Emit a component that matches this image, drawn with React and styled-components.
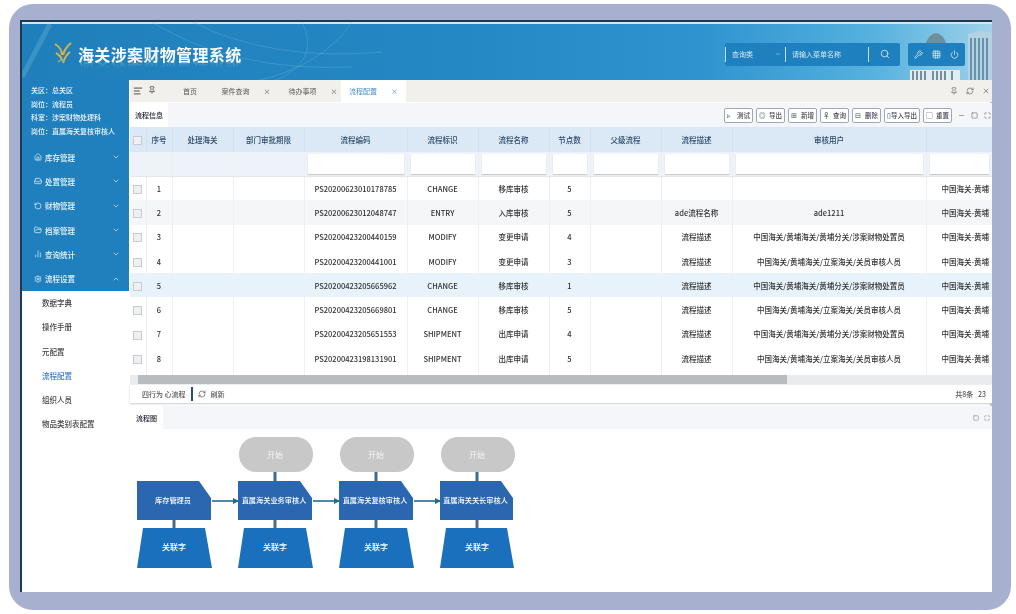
import React from "react";
import styled, { createGlobalStyle } from "styled-components";
import { Home, Inbox, RotateCcw, FolderOpen, BarChart2, Settings, ChevronDown, ChevronUp, Search, Grid3x3, Power, Wrench, AlignLeft, Pin, RefreshCw, X, Minus, Square, Maximize } from "lucide-react";

const Global = createGlobalStyle`
  html, body { margin: 0; padding: 0; background: #fff; }
  body { font-family: "Noto Sans CJK SC", "Liberation Sans", sans-serif; overflow: hidden; }
`;
const Frame = styled.div`
  box-sizing: border-box; width: 1002px; height: 606px; margin: 4px 0 0 9px;
  padding: 16px 19px 18px 11px; background: #a8b0d0; border-radius: 24px;
`;
const Shell = styled.div`
  width: 972px; height: 572px; background: #fff; display: flex; flex-direction: column;
  overflow: hidden; filter: blur(0.7px);
`;
const Header = styled.header`
  position: relative; flex: 0 0 60px; box-sizing: border-box; display: flex; align-items: center;
  padding: 6px 27px 0 30px; overflow: hidden;
  border-top: 2px solid #1d3a50; border-left: 2px solid #1d3a50;
  background: linear-gradient(90deg, #1f7fbb 0%, #2488c4 45%, #2e93cf 70%, #56b2df 88%, #9fd2ea 100%);
  box-shadow: inset 0 2px 0 #d5e6ef;
`;
const Arcs = styled.svg`position: absolute; left: 0; top: 0; pointer-events: none;`;
const Building = styled.svg`position: absolute; right: 0; top: 2px;`;
const Logo = styled.svg`flex: none; margin-right: 4px; position: relative;`;
const Title = styled.h1`
  position: relative; margin: 0; font-size: 16px; line-height: 22px; font-weight: 700; color: #f4fafd; letter-spacing: .35px;
  -webkit-box-reflect: below -7px linear-gradient(transparent 55%, rgba(255,255,255,.35));
`;
const HeaderRight = styled.div`position: relative; margin-left: auto; display: flex; gap: 8px;`;
const SearchPill = styled.div`
  width: 175px; height: 23px; border-radius: 2px; background: #1f80bf; color: #d4e9f5; display: flex; align-items: center; font-size: 7px;
`;
const Field = styled.span`
  box-sizing: border-box; width: ${p => p.$w}px; height: 15px; line-height: 15px; padding-left: 6px;
  border-left: 1px solid #bfe0f2; display: flex; justify-content: ${p => p.$center ? "center" : "space-between"}; align-items: center; padding-right: 4px;
`;
const ToolPill = styled.div`
  width: 57px; height: 23px; border-radius: 2px; background: #1f80bf; color: #dcecf6; display: flex; align-items: center; justify-content: space-around; padding: 0 2px; box-sizing: border-box;
`;
const Body = styled.div`flex: 1; display: flex; min-height: 0;`;
const Side = styled.aside`
  flex: 0 0 107px; display: flex; flex-direction: column; border-left: 2px solid #1d3a50; background: #fff;
`;
const SideBlue = styled.div`flex: 0 0 211px; background: #1f80bd; box-sizing: border-box; padding-top: 4px;`;
const Info = styled.div`
  padding: 0 0 0 9px; color: #eef6fb; font-size: 7px; font-weight: 500; line-height: 13.5px; height: 61px; white-space: nowrap;
`;
const MenuItem = styled.div`
  height: 24.3px; display: flex; align-items: center; gap: 3px; padding: 0 9px 0 12px; color: #eef6fb; font-size: 7.5px; font-weight: 500;
  span { flex: 1; }
`;
const SubItem = styled.div`
  height: 24.3px; line-height: 24.3px; padding-left: 20px; font-size: 7.5px; font-weight: 500; color: ${p => p.$on ? "#3a79c4" : "#444"};
`;
const Main = styled.main`flex: 1; min-width: 0; display: flex; flex-direction: column; box-shadow: inset -2px 0 1px #bbb; padding-left: 1px;`;
const TabBar = styled.div`
  flex: 0 0 22px; background: #f1f0ec; display: flex; align-items: center; font-size: 7px; color: #555; padding: 0 2px 0 3px;
`;
const TabIcons = styled.div`display: flex; gap: 5px; width: 40px; color: #333;`;
const Tab = styled.div`
  width: ${p => p.$w}px; height: 100%; display: flex; align-items: center; justify-content: center; gap: 14px;
  background: ${p => p.$on ? "#fff" : "transparent"}; color: ${p => p.$on ? "#4b8ec9" : "#555"};
`;
const TabEnd = styled.div`margin-left: auto; display: flex; gap: 8px; color: #666;`;
const SubBar = styled.div`
  flex: 0 0 24px; margin-top: 1px; background: #f4f6f9; display: flex; align-items: center; font-size: 7px; color: #223;
`;
const ActiveTab = styled.div`
  width: ${p => p.$w}px; height: 100%; background: #fff; display: flex; align-items: center; justify-content: center; font-size: 7px; font-weight: 500; color: #223;
`;
const Buttons = styled.div`margin-left: auto; display: flex; align-items: center; gap: 3px; padding-right: 1px; color: #777;`;
const Btn = styled.button`
  box-sizing: border-box; width: ${p => p.$w || 29}px; height: 15px; padding: 0 2px; margin: 0; border: 1px solid #9fa8b8; border-radius: 2px; background: #fff;
  font: 500 6.5px "Noto Sans CJK SC", sans-serif; color: #445; display: flex; align-items: center; justify-content: space-between; white-space: nowrap;
`;
const WinIcons = styled.div`display: flex; gap: 6px; margin-left: 3px; color: #666;`;
const TableWrap = styled.div`flex: 0 0 248px; overflow: hidden; background: #fff;`;
const Table = styled.table`
  table-layout: fixed; width: 862px; border-collapse: collapse; font-size: 7.5px; font-weight: 500; color: #333;
  td, th { padding: 0; text-align: center; border-right: 1px solid #eef0f3; overflow: hidden; white-space: nowrap; }
  td:last-child { padding-left: 12px; border-right: 0; }
`;
const HeadRow = styled.tr`
  height: 25px; background: #dbe9f6; th { font-weight: 500; color: #2c4a68; border-right-color: #cfe0ef; }
`;
const FilterRow = styled.tr`
  height: 24px; background: #eef3f9; td { border-bottom: 1px solid #e4e8ee; }
  td:last-child { padding-left: 0; }
`;
const FilterInput = styled.div`
  box-sizing: border-box; height: 20px; margin: 0 3px; background: #fff; box-shadow: 0 1px 1px #ccc;
`;
const Row = styled.tr`
  height: 24.3px; background: ${p => p.$sel ? "#e8f2fa" : p.$alt ? "#f5f6f8" : "#fff"};
`;
const Check = styled.span`
  display: inline-block; width: 7px; height: 7px; border: 1px solid #c8ccd2; background: #eef0f2; vertical-align: middle;
`;
const Scrollbar = styled.div`flex: 0 0 9px; background: #e9ebed; display: flex;`;
const Thumb = styled.div`width: 649px; background: #b9bcbe; margin-left: 8px;`;
const Pager = styled.div`
  flex: 0 0 18px; display: flex; align-items: center; padding: 0 6px 0 12px; background: #fff; font-size: 7px; font-weight: 500; color: #555; gap: 5px;
  box-shadow: 0 1px 2px #ccc; border-top: 1px solid #eee;
  em { width: 2px; height: 14px; background: #1f4f7f; }
  b { font-weight: 500; margin-left: auto; }
`;
const PanelBar = styled.div`
  flex: 0 0 23px; margin-top: 3px; background: #f4f6f9; display: flex; align-items: center; color: #777;
  span { margin-left: auto; display: flex; gap: 5px; padding-right: 2px; }
`;
const Canvas = styled.div`flex: 1; min-height: 0; background: #fff;`;

const info = ["关区：总关区", "岗位：流程员", "科室：涉案财物处理科", "岗位：直属海关复核审核人"];
const menu = [[Home, "库存管理"], [Inbox, "处置管理"], [RotateCcw, "财物管理"], [FolderOpen, "档案管理"], [BarChart2, "查询统计"], [Settings, "流程设置"]];
const sub = ["数据字典", "操作手册", "元配置", "流程配置", "组织人员", "物品类别表配置"];
const widths = [16, 26, 61, 71, 103, 71, 71, 41, 71, 71, 194, 66];
const heads = ["", "序号", "处理海关", "部门审批期限", "流程编码", "流程标识", "流程名称", "节点数", "父级流程", "流程描述", "审核用户", ""];
const filterCols = [4, 5, 6, 7, 8, 9, 10, 11];
const L1 = "中国海关/黄埔海关/黄埔分关/涉案财物处置员";
const L2 = "中国海关/黄埔海关/立案海关/关员审核人员";
const U = "中国海关-黄埔";
const rows = [
  ["1", "PS20200623010178785", "CHANGE", "移库审核", "5", "", "", "", U],
  ["2", "PS20200623012048747", "ENTRY", "入库审核", "5", "", "ade流程名称", "ade1211", U],
  ["3", "PS20200423200440159", "MODIFY", "变更申请", "4", "", "流程描述", L1, U],
  ["4", "PS20200423200441001", "MODIFY", "变更申请", "3", "", "流程描述", L2, U],
  ["5", "PS20200423205665962", "CHANGE", "移库审核", "1", "", "流程描述", L1, U],
  ["6", "PS20200423205669801", "CHANGE", "移库审核", "5", "", "流程描述", L2, U],
  ["7", "PS20200423205651553", "SHIPMENT", "出库申请", "4", "", "流程描述", L1, U],
  ["8", "PS20200423198131901", "SHIPMENT", "出库申请", "5", "", "流程描述", L2, U],
];
const buttons = [["▹", "测试", 29], ["◎", "导出", 29], ["⊞", "新增", 29], ["♀", "查询", 29], ["⊟", "删除", 29], ["▯", "导入导出", 36], ["▢", "重置", 29]];

const nodes = [
  { x: 7, w: 74, label: "库存管理员" },
  { x: 108, w: 74, label: "直属海关业务审核人", start: true },
  { x: 209, w: 74, label: "直属海关复核审核人", start: true },
  { x: 310, w: 73, label: "直属海关关长审核人", start: true },
];

function FlowChart() {
  return (
    <svg width="420" height="164" viewBox="0 0 420 164" style={{ display: "block" }} fontFamily="Noto Sans CJK SC, sans-serif">
      <defs>
        <marker id="arr" markerUnits="userSpaceOnUse" markerWidth="6" markerHeight="6" refX="5" refY="3" orient="auto">
          <path d="M0 0L6 3L0 6z" fill="#1d6f8f" />
        </marker>
      </defs>
      {nodes.map((n, i) => (
        <g key={i}>
          {n.start && (
            <>
              <rect x={n.x + 1} y="8" width="74" height="35" rx="17" fill="#c8c8c8" />
              <line x1={n.x + 37} x2={n.x + 37} y1="43" y2="52" stroke="#3b6a8e" strokeWidth="3" />
              <text x={n.x + 37} y="29" fontSize="8" fill="#f4f4f4" textAnchor="middle">开始</text>
            </>
          )}
          <path d={`M${n.x} 52H${n.x + n.w - 12}L${n.x + n.w} 69V91H${n.x}Z`} fill="#2b66b1" />
          <text x={n.x + n.w / 2 - 1} y="74" fontSize="7.2" fontWeight="500" fill="#fff" textAnchor="middle">{n.label}</text>
          <line x1={n.x + 37} x2={n.x + 37} y1="91" y2="99" stroke="#4a6a85" strokeWidth="3" />
          <path d={`M${n.x + 6} 99H${n.x + n.w - 6}L${n.x + n.w + 1} 139H${n.x}Z`} fill="#1a70bd" />
          <text x={n.x + 37} y="121" fontSize="8" fontWeight="500" fill="#fff" textAnchor="middle">关联字</text>
          {i < 3 && (
            <line x1={n.x + n.w + 1} x2={nodes[i + 1].x} y1="72" y2="72" stroke="#246d96" strokeWidth="1.6" markerEnd="url(#arr)" />
          )}
        </g>
      ))}
    </svg>
  );
}

export default function App() {
  return (
    <>
      <Global />
      <Frame>
        <Shell>
          <Header>
            <Arcs width="972" height="60" fill="none" stroke="#6cb5dd" strokeOpacity=".35">
              <path d="M0 55L28 2" stroke="#8ccbe8" strokeWidth="5" strokeOpacity=".25" />
              <path d="M130 0Q210 50 330 45" /><path d="M170 0Q250 40 360 30" /><path d="M280 0Q300 40 250 60" /><path d="M330 0Q300 45 230 60" />
            </Arcs>
            <Building width="92" height="58" viewBox="0 0 92 58">
              <path d="M25 22Q28 10 36 9Q44 10 47 22Z" fill="#6f8f9c" />
              <path d="M68 58V10L80 7L92 9V58Z" fill="#b4d2e2" />
              <path d="M71 14V58M75 14V58M79 14V58M83 14V58M87 14V58" stroke="#4f7d97" strokeWidth="1.5" />
              <path d="M10 58V46H60V58Z" fill="#dfecf3" />
              <path d="M13 47V58M17 47V58M21 47V58M25 47V58M33 47V58M37 47V58M41 47V58M45 47V58M52 47V58" stroke="#55707f" strokeWidth="1.5" />
            </Building>
            <Logo width="22" height="26" viewBox="0 0 22 26" fill="none">
              <path d="M3 3C8 6 10 11 10 14M19 2C14 6 12 10 11 14M4 12C7 14 9 15 10 19M18 11C15 13 13 16 11 22" stroke="#d9b24a" strokeWidth="2" />
              <path d="M6 21C8 19 10 19 12 20" stroke="#7fb4a0" strokeWidth="1.5" />
            </Logo>
            <Title>海关涉案财物管理系统</Title>
            <HeaderRight>
              <SearchPill>
                <Field $w={60}>查询类<ChevronDown size={6} /></Field>
                <Field $w={83}>请输入菜单名称</Field>
                <Field $w={30} $center><Search size={10} /></Field>
              </SearchPill>
              <ToolPill>
                <Wrench size={9} /><Grid3x3 size={9} /><Power size={9} />
              </ToolPill>
            </HeaderRight>
          </Header>
          <Body>
            <Side>
              <SideBlue>
                <Info>{info.map(t => <div key={t}>{t}</div>)}</Info>
                {menu.map(([I, t], i) => (
                  <MenuItem key={t}>
                    <I size={8} /><span>{t}</span>
                    {i === 5 ? <ChevronUp size={8} /> : <ChevronDown size={8} />}
                  </MenuItem>
                ))}
              </SideBlue>
              {sub.map((t, i) => <SubItem key={t} $on={i === 3}>{t}</SubItem>)}
            </Side>
            <Main>
              <TabBar>
                <TabIcons><AlignLeft size={10} /><Pin size={8} /></TabIcons>
                <Tab $w={34}>首页</Tab>
                <Tab $w={78}>案件查询<span>×</span></Tab>
                <Tab $w={56}>待办事项<span>×</span></Tab>
                <Tab $w={65} $on>流程配置<span>×</span></Tab>
                <TabEnd><Pin size={8} /><RefreshCw size={8} /><X size={8} /></TabEnd>
              </TabBar>
              <SubBar>
                <ActiveTab $w={38}>流程信息</ActiveTab>
                <Buttons>
                  {buttons.map(([g, t, w]) => <Btn key={t} $w={w}><span>{g}</span><span>{t}</span></Btn>)}
                  <WinIcons><Minus size={7} /><Square size={7} /><Maximize size={7} /></WinIcons>
                </Buttons>
              </SubBar>
              <TableWrap>
                <Table>
                  <colgroup>{widths.map((w, i) => <col key={i} style={{ width: w }} />)}</colgroup>
                  <thead>
                    <HeadRow>{heads.map((h, i) => <th key={i}>{i === 0 ? <Check /> : h}</th>)}</HeadRow>
                    <FilterRow>
                      {widths.map((_, i) => <td key={i}>{filterCols.includes(i) ? <FilterInput /> : null}</td>)}
                    </FilterRow>
                  </thead>
                  <tbody>
                    {rows.map((r, i) => (
                      <Row key={i} $alt={i === 1} $sel={i === 4}>
                        <td><Check /></td><td>{r[0]}</td><td></td><td></td>
                        {r.slice(1).map((c, j) => <td key={j}>{c}</td>)}
                      </Row>
                    ))}
                    <Row>{widths.map((_, i) => <td key={i}></td>)}</Row>
                  </tbody>
                </Table>
              </TableWrap>
              <Scrollbar><Thumb /></Scrollbar>
              <Pager>
                <span>四行为 心流程</span><em /><RefreshCw size={8} /><span>刷新</span>
                <b>共8条 &nbsp; 23</b>
              </Pager>
              <PanelBar>
                <ActiveTab $w={33}>流程图</ActiveTab>
                <span><Square size={6} /><Maximize size={6} /></span>
              </PanelBar>
              <Canvas><FlowChart /></Canvas>
            </Main>
          </Body>
        </Shell>
      </Frame>
    </>
  );
}
